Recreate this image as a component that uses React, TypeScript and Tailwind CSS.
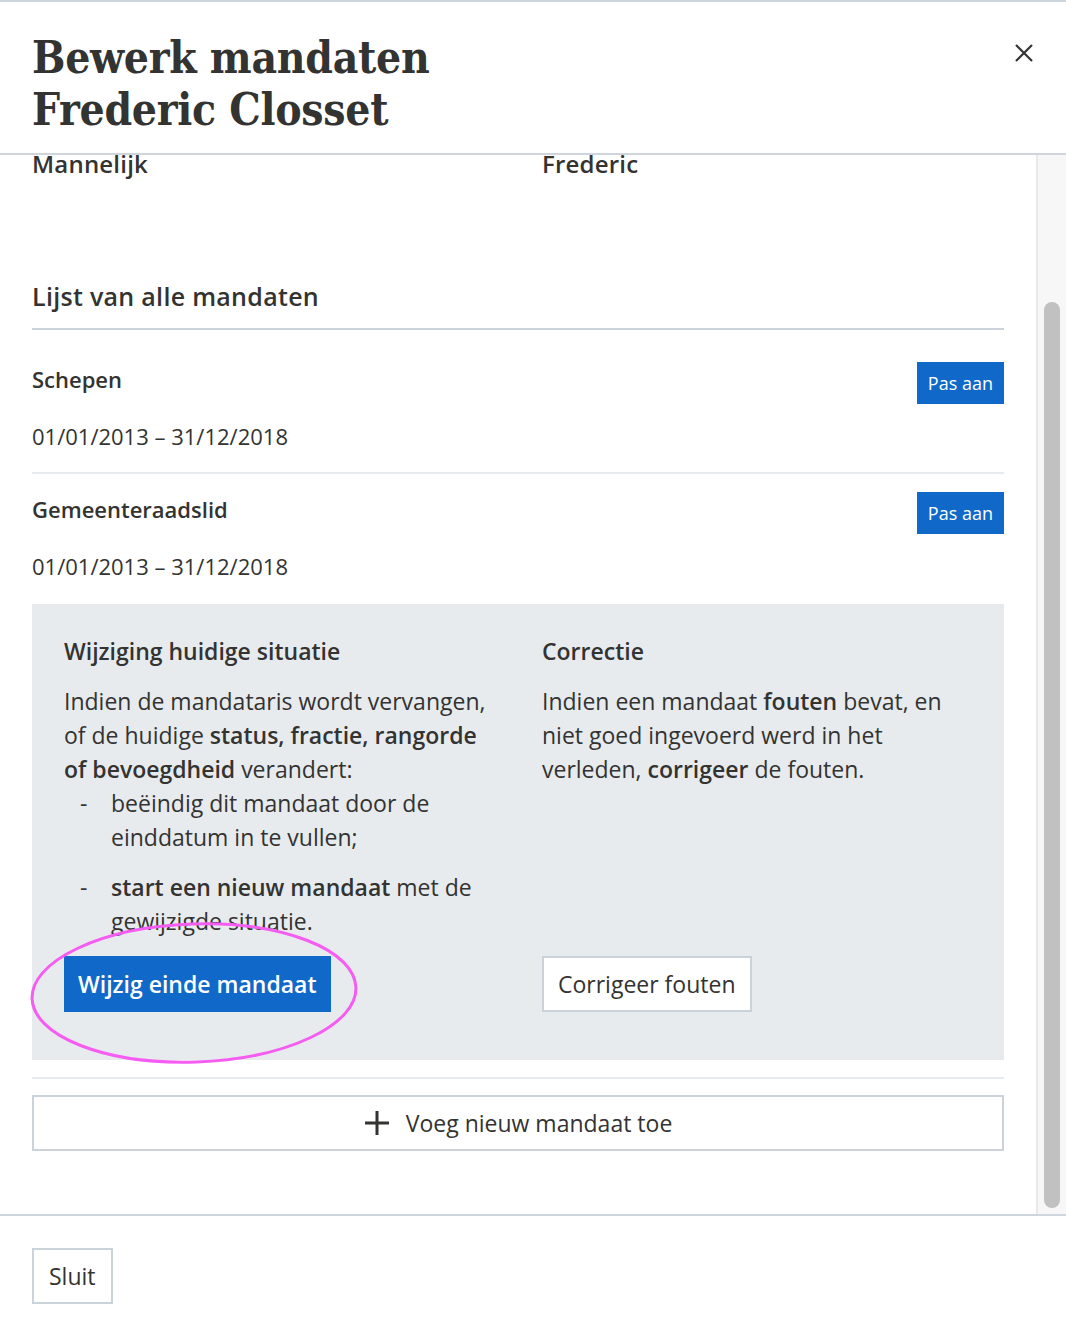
import React from 'react';

interface Mandate {
  title: string;
  period: string;
}

const mandates: Mandate[] = [
  { title: 'Schepen', period: '01/01/2013 – 31/12/2018' },
  { title: 'Gemeenteraadslid', period: '01/01/2013 – 31/12/2018' },
];

const CloseIcon = () => (
  <svg width="20" height="20" viewBox="0 0 20 20" fill="none" stroke="#333332" strokeWidth="2.2">
    <path d="M2 2 L18 18 M18 2 L2 18" />
  </svg>
);

const PlusIcon = () => (
  <svg width="26" height="26" viewBox="0 0 26 26" fill="none" stroke="#333332" strokeWidth="3">
    <path d="M13 1 V25 M1 13 H25" />
  </svg>
);

const MandateRow: React.FC<{ mandate: Mandate; last?: boolean }> = ({ mandate, last }) => (
  <div className={`pt-[18px] ${last ? 'pb-[21px]' : 'pb-[19px] border-b-2 border-[#e8ebee]'}`}>
    <div className="flex items-start justify-between">
      <h3 className="text-[22px] leading-[34px] font-semibold">{mandate.title}</h3>
      <button className="h-[42px] px-[11px] bg-[#1069c9] text-white text-[18px] font-medium">Pas aan</button>
    </div>
    <p className="mt-[15px] text-[22px] leading-[34px]">{mandate.period}</p>
  </div>
);

export default function App() {
  return (
    <div className="w-[1066px] h-[1336px] flex flex-col bg-white overflow-hidden border-t-2 border-[#cfd5dd] text-[#333332] font-['Open_Sans',sans-serif]">
      {/* header */}
      <div className="h-[153px] shrink-0 flex items-start justify-between pl-8 pr-8 pt-[30px] border-b-2 border-[#cfd5dd]">
        <h1 className="font-['DejaVu_Serif_Condensed','DejaVu_Serif',serif] font-bold text-[44px] leading-[52px] tracking-[-0.3px]">
          Bewerk mandaten
          <br />
          Frederic Closset
        </h1>
        <button className="mt-[11px]">
          <CloseIcon />
        </button>
      </div>

      {/* scrollable body */}
      <div className="flex-1 flex min-h-0">
        <div className="flex-1 overflow-hidden">
          <div className="-mt-[7px] px-8 pb-16">
            <div className="grid grid-cols-2 gap-x-12 text-[24px] leading-[32px] font-semibold tracking-[0.2px]">
              <span>Mannelijk</span>
              <span>Frederic</span>
            </div>

            <h2 className="mt-[99px] text-[25px] leading-[34px] font-semibold tracking-[0.3px] pb-[15px] border-b-2 border-[#cbd2da]">
              Lijst van alle mandaten
            </h2>

            <div className="mt-[14px]">
              {mandates.map((m, i) => (
                <MandateRow key={m.title} mandate={m} last={i === mandates.length - 1} />
              ))}
            </div>

            <div className="bg-[#e8ebee] px-8 pt-[32px] pb-[48px] grid grid-cols-2 gap-x-12 text-[23px] leading-[34px]">
              <div className="flex flex-col">
                <h4 className="font-semibold leading-[30px]">Wijziging huidige situatie</h4>
                <p className="mt-[18px]">
                  Indien de mandataris wordt vervangen, of de huidige{' '}
                  <b className="font-semibold">status, fractie, rangorde of bevoegdheid</b> verandert:
                </p>
                <ul className="pl-[47px]">
                  <li className="relative">
                    <span className="absolute -left-[31px]">-</span>
                    beëindig dit mandaat door de einddatum in te vullen;
                  </li>
                  <li className="relative mt-[16px]">
                    <span className="absolute -left-[31px]">-</span>
                    <b className="font-semibold">start een nieuw mandaat</b> met de gewijzigde situatie.
                  </li>
                </ul>
                <div className="relative mt-[18px]">
                  <button className="h-[56px] px-[14px] bg-[#1069c9] text-white text-[23px] font-semibold">
                    Wijzig einde mandaat
                  </button>
                  <svg
                    className="absolute -left-[36px] -top-[36px] pointer-events-none"
                    width="332"
                    height="146"
                    viewBox="0 0 332 146"
                    fill="none"
                  >
                    <ellipse
                      cx="166"
                      cy="73"
                      rx="162"
                      ry="69"
                      stroke="#f55cf1"
                      strokeWidth="3"
                      transform="rotate(-2 166 73)"
                    />
                  </svg>
                </div>
              </div>

              <div className="flex flex-col justify-between">
                <div>
                  <h4 className="font-semibold leading-[30px]">Correctie</h4>
                  <p className="mt-[18px]">
                    Indien een mandaat <b className="font-semibold">fouten</b> bevat, en niet goed ingevoerd werd in het
                    verleden, <b className="font-semibold">corrigeer</b> de fouten.
                  </p>
                </div>
                <div>
                  <button className="h-[56px] px-[14px] bg-white border-2 border-[#cbd2da] text-[23px]">
                    Corrigeer fouten
                  </button>
                </div>
              </div>
            </div>

            <div className="mt-[17px] border-t-2 border-[#e8ebee]" />

            <button className="mt-[16px] w-full h-[56px] flex items-center justify-center gap-[16px] border-2 border-[#cbd2da] bg-white text-[23px]">
              <PlusIcon />
              Voeg nieuw mandaat toe
            </button>
          </div>
        </div>

        {/* scrollbar */}
        <div className="w-[30px] shrink-0 bg-[#f7f7f7] border-l-2 border-[#e8e8e8] pl-[6px] pr-[6px] pt-[147px] pb-[6px]">
          <div className="h-full w-[16px] rounded-full bg-[#c1c1c1]" />
        </div>
      </div>

      {/* footer */}
      <div className="h-[122px] shrink-0 border-t-2 border-[#cfd5dd] px-8 flex items-center">
        <button className="h-[56px] px-[15px] border-2 border-[#cbd2da] bg-white text-[23px]">Sluit</button>
      </div>
    </div>
  );
}
